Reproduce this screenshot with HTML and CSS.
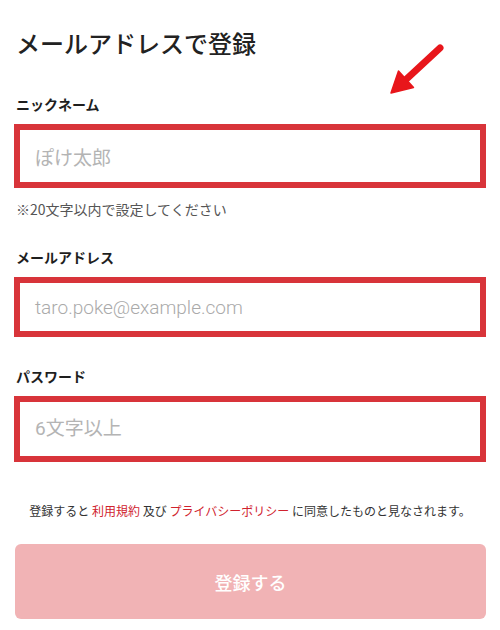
FILE: index.html
```html
<!DOCTYPE html>
<html lang="ja">
<head>
<meta charset="utf-8">
<title>メールアドレスで登録</title>
<link rel="stylesheet" href="styles.css">
</head>
<body>
<div class="page">
  <h1 class="title">メールアドレスで登録</h1>

  <div class="label label-first">ニックネーム</div>
  <div class="box box-nick"><span class="ph">ぽけ太郎</span></div>
  <div class="hint">※20文字以内で設定してください</div>

  <div class="label label-mail">メールアドレス</div>
  <div class="box box-mail"><span class="ph ph-latin">taro.poke@example.com</span></div>

  <div class="label label-pass">パスワード</div>
  <div class="box box-pass"><span class="ph">6文字以上</span></div>

  <p class="terms">登録すると <a class="link">利用規約</a> 及び <a class="link">プライバシーポリシー</a> に同意したものと見なされます。</p>

  <div class="submit">登録する</div>

  <svg class="arrow" width="500" height="120" viewBox="0 0 500 120" aria-hidden="true">
    <line x1="440" y1="48" x2="406" y2="79.5" stroke="#e8161b" stroke-width="7" stroke-linecap="round"/>
    <polygon points="391,93 413.5,87.5 398.5,71" fill="#e8161b" stroke="#e8161b" stroke-width="1.5" stroke-linejoin="round"/>
  </svg>
</div>
</body>
</html>
```

FILE: styles.css
```css
* { box-sizing: border-box; }
html, body {
  margin: 0;
  padding: 0;
  background: #ffffff;
}
body {
  font-family: "Noto Sans CJK JP", "Noto Sans", sans-serif;
  color: #222222;
}
.page {
  position: relative;
  width: 500px;
  height: 630px;
  padding: 25px 14px 0 14px;
}
.title {
  margin: 0;
  padding-left: 2px;
  font-size: 24px;
  line-height: 36px;
  font-weight: 500;
  color: #222222;
}
.label {
  font-size: 14px;
  line-height: 20px;
  font-weight: 700;
  color: #1e1e1e;
  padding-left: 2px;
  margin-bottom: 10px;
}
.label-first { margin-top: 33px; }
.label-mail { margin-top: 28px; }
.label-pass { margin-top: 29px; }
.box {
  border: 6px solid #d8343a;
  background: #ffffff;
  display: flex;
  align-items: center;
  padding-left: 15px;
}
.box-nick { height: 64px; }
.box-mail { height: 60px; }
.box-pass { height: 66px; padding-bottom: 6px; }
.ph {
  font-size: 19px;
  color: #b4b4b4;
  font-weight: 400;
  font-family: "Roboto", "Noto Sans CJK JP", sans-serif;
}
.ph-latin {
  font-weight: 300;
  color: #aaaaaa;
}
.hint {
  margin-top: 11px;
  font-size: 14px;
  line-height: 20px;
  color: #555555;
  padding-left: 2px;
}
.terms {
  margin: 39px 0 0 0;
  font-size: 12px;
  line-height: 20px;
  text-align: center;
  color: #333333;
}
.link {
  color: #d0222e;
  text-decoration: none;
}
.submit {
  margin-top: 23px;
  margin-left: 1px;
  height: 75px;
  border-radius: 6px;
  background: #f1b3b5;
  color: #ffffff;
  font-size: 18px;
  font-weight: 500;
  display: flex;
  align-items: center;
  justify-content: center;
}
.arrow {
  position: absolute;
  left: 0;
  top: 0;
}
```
